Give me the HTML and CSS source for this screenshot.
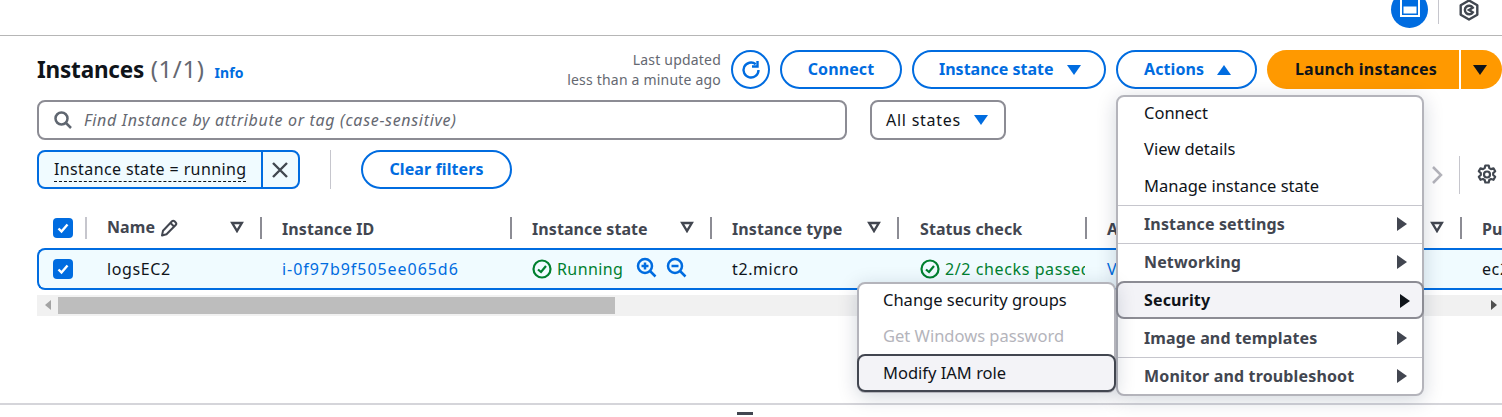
FILE: index.html
```html
<!DOCTYPE html>
<html lang="en">
<head>
<meta charset="utf-8">
<title>Instances</title>
<link rel="stylesheet" href="styles.css">
</head>
<body>
<div class="page">
  <header class="topbar">
    <span class="round-app">
      <svg width="37" height="37" viewBox="0 0 37 37"><path d="M9 0h20v26H9z" fill="#fff"/><path d="M11 0h16v24H11z" fill="#006ce0"/><path d="M12.500 15.500h13v7h-13z" fill="#fff"/></svg>
    </span>
    <span class="top-sep"></span>
    <svg class="hex" width="22" height="22" viewBox="0 0 22 22" fill="none" stroke="#414750" stroke-width="2.400"><path d="M11 1.500l8.300 4.700v9.600L11 20.500l-8.300-4.700V6.200z" stroke-linejoin="round"/><path d="M14.800 8.700a4.300 4.300 0 1 0 0 4.600L11 11z"/></svg>
  </header>

  <main class="panel">
    <div class="title-row">
      <h1 class="title">Instances <span class="count">(1/1)</span><a class="info">Info</a></h1>
      <div class="actions">
        <div class="updated">Last updated<br>less than a minute ago</div>
        <button class="btn btn-icon" aria-label="Refresh">
          <svg width="24" height="24" viewBox="0 0 24 24" fill="none" stroke="#006ce0" stroke-width="2.400"><path d="M19.500 12a7.500 7.500 0 1 1-2.800-5.800"/><path d="M18.500 3v5.500H13"/></svg>
        </button>
        <button class="btn btn-connect">Connect</button>
        <button class="btn btn-state">Instance state<svg class="caret" width="14" height="10" viewBox="0 0 14 10"><path d="M0 0h14L7 10z" fill="#006ce0"/></svg></button>
        <button class="btn btn-actions">Actions<svg class="caret" width="14" height="10" viewBox="0 0 14 10"><path d="M0 10h14L7 0z" fill="#006ce0"/></svg></button>
        <div class="split">
          <button class="launch">Launch instances</button>
          <button class="launch-drop" aria-label="More"><svg width="14" height="10" viewBox="0 0 14 10"><path d="M0 0h14L7 10z" fill="#0f141a"/></svg></button>
        </div>
      </div>
    </div>

    <div class="search-row">
      <div class="search">
        <svg width="20" height="20" viewBox="0 0 20 20" fill="none" stroke="#5f6670" stroke-width="2.500"><circle cx="8.500" cy="8.500" r="6"/><path d="M13 13l5 5"/></svg>
        <span class="placeholder">Find Instance by attribute or tag (case-sensitive)</span>
      </div>
      <div class="select"><span>All states</span><svg width="14" height="10" viewBox="0 0 14 10"><path d="M0 0h14L7 10z" fill="#006ce0"/></svg></div>
    </div>

    <div class="filter-row">
      <div class="token">
        <span class="token-text"><span class="dashed">Instance state = running</span></span>
        <button class="token-x" aria-label="Remove"><svg width="18" height="18" viewBox="0 0 18 18" stroke="#414750" stroke-width="2.400"><path d="M2 2l14 14M16 2L2 16"/></svg></button>
      </div>
      <span class="filter-sep"></span>
      <button class="btn btn-clear">Clear filters</button>
      <div class="pager">
        <svg width="12" height="20" viewBox="0 0 12 20" fill="none" stroke="#b4b4bb" stroke-width="2.500"><path d="M2 2l8 8-8 8"/></svg>
        <span class="pager-sep"></span>
        <svg class="gear" width="20" height="21" viewBox="0 0 20 21" fill="none" stroke="#414750" stroke-width="2.200"><path d="M8.300 1.500h3.400l.6 2.600 1.700 1 2.500-.8 1.700 3-2 1.800v1.900l2 1.800-1.700 3-2.500-.8-1.700 1-.6 2.500H8.300l-.6-2.500-1.700-1-2.500.8-1.700-3 2-1.800V9.100l-2-1.800 1.700-3 2.500.8 1.700-1z" stroke-linejoin="round"/><circle cx="10" cy="10.500" r="3"/></svg>
      </div>
    </div>

    <div class="table">
      <div class="grid head">
        <div class="cell cell-check"><span class="check"><svg width="14" height="14" viewBox="0 0 14 14" fill="none" stroke="#fff" stroke-width="2.400"><path d="M2.500 7.500l3 3 6-7"/></svg></span><i class="sep light"></i></div>
        <div class="cell th th-name"><span>Name</span><svg class="pencil" width="18" height="18" viewBox="0 0 18 18" fill="none" stroke="#424650" stroke-width="2"><path d="M2 16.500l1-4.800L12 2.300a1.800 1.800 0 0 1 2.500 0l1.200 1.200a1.800 1.800 0 0 1 0 2.500L6.500 15.300z" stroke-linejoin="round"/><path d="M10.500 4l3.500 3.500"/></svg><svg class="filt" width="14" height="12" viewBox="0 0 14 12" fill="none" stroke="#424650" stroke-width="2.400"><path d="M2.200 2h9.600L7 10z"/></svg><i class="sep"></i></div>
        <div class="cell th"><span>Instance ID</span><i class="sep"></i></div>
        <div class="cell th"><span>Instance state</span><svg class="filt" width="14" height="12" viewBox="0 0 14 12" fill="none" stroke="#424650" stroke-width="2.400"><path d="M2.200 2h9.600L7 10z"/></svg><i class="sep"></i></div>
        <div class="cell th"><span>Instance type</span><svg class="filt" width="14" height="12" viewBox="0 0 14 12" fill="none" stroke="#424650" stroke-width="2.400"><path d="M2.200 2h9.600L7 10z"/></svg><i class="sep"></i></div>
        <div class="cell th th-status"><span>Status check</span><i class="sep"></i></div>
        <div class="cell th"><span>Alarm status</span><svg class="filt" width="14" height="12" viewBox="0 0 14 12" fill="none" stroke="#424650" stroke-width="2.400"><path d="M2.200 2h9.600L7 10z"/></svg><i class="sep"></i></div>
        <div class="cell th"><span>Public IPv4 DNS</span></div>
      </div>
      <div class="grid row">
        <div class="cell cell-check"><span class="check"><svg width="14" height="14" viewBox="0 0 14 14" fill="none" stroke="#fff" stroke-width="2.400"><path d="M2.500 7.500l3 3 6-7"/></svg></span></div>
        <div class="cell td">logsEC2</div>
        <div class="cell td link id">i-0f97b9f505ee065d6</div>
        <div class="cell td green">
          <svg class="ok" width="20" height="20" viewBox="0 0 20 20" fill="none" stroke="#00802f" stroke-width="2.200"><circle cx="10" cy="10" r="8.500"/><path d="M6 10.500l3 2.500 5-6"/></svg><span>Running</span>
          <svg class="zoom plus" width="21" height="21" viewBox="0 0 21 21" fill="none" stroke="#006ce0" stroke-width="2.500"><circle cx="9" cy="9" r="7"/><path d="M14 14l5.500 5.500M5.500 9h7M9 5.500v7"/></svg>
          <svg class="zoom" width="21" height="21" viewBox="0 0 21 21" fill="none" stroke="#006ce0" stroke-width="2.500"><circle cx="9" cy="9" r="7"/><path d="M14 14l5.500 5.500M5.500 9h7"/></svg>
        </div>
        <div class="cell td">t2.micro</div>
        <div class="cell td green clip">
          <svg class="ok" width="20" height="20" viewBox="0 0 20 20" fill="none" stroke="#00802f" stroke-width="2.200"><circle cx="10" cy="10" r="8.500"/><path d="M6 10.500l3 2.500 5-6"/></svg><span class="status-text">2/2 checks passed</span>
        </div>
        <div class="cell td link">View alarms</div>
        <div class="cell td">ec2-3-15-1-1.compute</div>
      </div>
      <div class="scrollbar">
        <svg class="sb-arrow" width="6" height="10" viewBox="0 0 6 10"><path d="M6 0v10L0 5z" fill="#a3a3a3"/></svg>
        <span class="thumb"></span>
        <svg class="sb-arrow right" width="6" height="10" viewBox="0 0 6 10"><path d="M0 0v10l6-5z" fill="#505050"/></svg>
      </div>
    </div>
  </main>

  <footer class="footer"><span class="handle"></span></footer>

  <ul class="menu actions-menu">
    <li class="mi plain">Connect</li>
    <li class="mi plain">View details</li>
    <li class="mi plain last">Manage instance state</li>
    <li class="mi group">Instance settings<svg width="10" height="14" viewBox="0 0 10 14"><path d="M0 0l10 7-10 7z" fill="#424650"/></svg></li>
    <li class="mi group">Networking<svg width="10" height="14" viewBox="0 0 10 14"><path d="M0 0l10 7-10 7z" fill="#424650"/></svg></li>
    <li class="mi group active">Security<svg width="10" height="14" viewBox="0 0 10 14"><path d="M0 0l10 7-10 7z" fill="#0f141a"/></svg></li>
    <li class="mi group">Image and templates<svg width="10" height="14" viewBox="0 0 10 14"><path d="M0 0l10 7-10 7z" fill="#424650"/></svg></li>
    <li class="mi group">Monitor and troubleshoot<svg width="10" height="14" viewBox="0 0 10 14"><path d="M0 0l10 7-10 7z" fill="#424650"/></svg></li>
  </ul>

  <ul class="menu sub-menu">
    <li class="mi plain">Change security groups</li>
    <li class="mi plain disabled">Get Windows password</li>
    <li class="mi plain hover">Modify IAM role</li>
  </ul>
</div>
</body>
</html>
```

FILE: styles.css
```css
* { box-sizing: border-box; }
html, body { margin: 0; padding: 0; }
body { background: #fff; color: #0f141a; font-family: "Noto Sans", "Open Sans", sans-serif; font-size: 16px; overflow: hidden; }
button { font-family: inherit; cursor: pointer; }
.page { position: relative; width: 1502px; height: 417px; overflow: hidden; }

.topbar { height: 36px; border-bottom: 1px solid #b6b6b6; display: flex; align-items: flex-start; justify-content: flex-end; padding-right: 22px; overflow: hidden; }
.round-app { width: 37px; height: 37px; margin-top: -9px; border-radius: 50%; background: #006ce0; display: block; flex: none; overflow: hidden; }
.round-app svg { display: block; }
.top-sep { width: 1px; height: 24px; background: #c6c6cd; margin-left: 10px; }
.hex { margin-left: 19px; margin-top: -1px; }

.panel { padding: 14px 0 0 37px; height: 367px; }
.title-row { display: flex; justify-content: space-between; align-items: center; height: 39px; }
.title { margin: 2px 0 0; font-size: 22.500px; font-weight: 700; line-height: 38px; letter-spacing: -.2px; }
.count { font-weight: 400; color: #656871; margin-left: 1px; font-size: 24px; letter-spacing: .6px; }
.info { font-size: 14px; font-weight: 700; color: #006ce0; margin-left: 10px; letter-spacing: .1px; }
.actions { display: flex; align-items: center; }
.updated { font-size: 14px; line-height: 20px; color: #656871; text-align: right; margin-right: 10px; letter-spacing: .2px; }
.btn { height: 39px; border: 2px solid #006ce0; border-radius: 20px; background: #fff; color: #006ce0; font-size: 16px; font-weight: 700; display: inline-flex; align-items: center; justify-content: center; padding: 0 0 2px; flex: none; letter-spacing: .1px; }
.caret { margin-top: 2px; }
.btn-icon { width: 39px; border-radius: 50%; margin-right: 10px; padding: 0; }
.btn-connect { width: 122px; margin-right: 10px; }
.btn-state { width: 194px; margin-right: 10px; gap: 13px; justify-content: flex-start; padding-left: 25px; letter-spacing: 0; }
.btn-actions { width: 141px; margin-right: 10px; gap: 13px; justify-content: flex-start; padding-left: 26px; }
.split { display: flex; gap: 2px; }
.launch { width: 192px; height: 39px; border: 0; border-radius: 20px 0 0 20px; background: #f90; color: #0f141a; font-size: 16px; font-weight: 700; padding: 0 0 2px 6px; letter-spacing: .25px; }
.launch-drop { width: 41px; height: 39px; border: 0; border-radius: 0 20px 20px 0; background: #f90; padding: 0 3px 0 0; display: flex; align-items: center; justify-content: center; }

.search-row { display: flex; margin-top: 11px; gap: 23px; }
.search { width: 810px; height: 40px; border: 2px solid #8c8c94; border-radius: 8px; display: flex; align-items: center; padding-left: 14px; gap: 11px; }
.placeholder { font-style: italic; color: #656871; letter-spacing: .68px; }
.select { width: 136px; height: 40px; border: 2px solid #8c8c94; border-radius: 8px; display: flex; align-items: center; padding-left: 14px; gap: 13px; }
.select span { letter-spacing: .75px; }

.filter-row { display: flex; align-items: center; margin-top: 10px; height: 39px; }
.token { width: 263px; height: 39px; border: 2px solid #006ce0; border-radius: 8px; background: #f0fbff; display: flex; overflow: hidden; flex: none; }
.token-text { flex: 1; padding-left: 15px; line-height: 34px; white-space: nowrap; letter-spacing: .38px; }
.dashed { border-bottom: 1px dashed #0f141a; padding-bottom: 1px; }
.token-x { width: 37px; border: 0; border-left: 2px solid #006ce0; background: transparent; padding: 0 2px 0 0; display: flex; align-items: center; justify-content: center; }
.filter-sep { width: 1px; height: 39px; background: #c6c6cd; margin: 0 30px; flex: none; }
.btn-clear { width: 151px; }
.pager { margin-left: auto; margin-top: 10px; display: flex; align-items: center; padding-right: 5px; }
.pager-sep { width: 1px; height: 38px; background: #c6c6cd; margin: 0 17px 0 16px; }

.table { margin-top: 25px; overflow: hidden; }
.grid { display: grid; grid-template-columns: 49px 175px 250px 200px 187px 188px 375px 200px; width: 1624px; }
.cell { position: relative; display: flex; align-items: center; white-space: nowrap; padding-left: 21px; }
.head { height: 29px; }
.th { color: #424650; font-weight: 700; letter-spacing: .08px; }
.th-name > span { margin-top: -4px; }
.th-status { padding-left: 22px; }
.pencil { margin-left: 5px; margin-top: -2px; }
.filt { position: absolute; right: 17px; top: 7px; }
.sep { position: absolute; right: -1px; top: 3px; width: 2px; height: 22px; background: #8c8c94; }
.sep.light { background: #c6c6cd; }
.cell-check { padding-left: 16px; }
.head .check { margin-top: -2px; }
.check { width: 20px; height: 20px; border-radius: 4px; background: #006ce0; display: flex; align-items: center; justify-content: center; flex: none; }
.row { height: 42px; margin-top: 5px; border: 2px solid #006ce0; border-right: 0; border-radius: 8px 0 0 8px; background: #f0fbff; grid-template-columns: 47px 175px 250px 200px 187px 188px 375px 200px; }
.row .cell-check { padding-left: 14px; }
.td { letter-spacing: .6px; padding-bottom: 1px; }
.id { letter-spacing: .95px; }
.link { color: #006ce0; }
.green { color: #00802f; letter-spacing: .4px; }
.clip { overflow: hidden; padding-right: 1px; padding-left: 22px; letter-spacing: .6px; }
.status-text { overflow: hidden; min-width: 0; }
.ok { flex: none; margin-right: 5px; }
.zoom { margin-left: 9px; flex: none; margin-top: -2px; }
.zoom.plus { margin-left: 13px; }
.scrollbar { position: relative; height: 21px; margin-top: 5px; background: #f1f1f1; display: flex; align-items: center; }
.sb-arrow { position: absolute; left: 8px; top: 5px; }
.sb-arrow.right { left: auto; right: 5px; }
.thumb { position: absolute; left: 21px; top: 2px; width: 557px; height: 17px; background: #bdbdbd; }

.footer { height: 14px; border-top: 2px solid #d5d5da; display: flex; justify-content: center; position: relative; }
.handle { width: 16px; height: 3px; background: #424650; margin-top: 7px; margin-left: -12px; }

.menu { list-style: none; margin: 0; padding: 0; position: absolute; background: #fff; border: 2px solid #b4b4bb; border-radius: 8px; box-shadow: 0 4px 20px rgba(0, 27, 60, .18); }
.actions-menu { left: 1116px; top: 95px; width: 308px; height: 301px; }
.sub-menu { left: 857px; top: 282px; width: 259px; height: 111px; }
.mi { display: flex; align-items: center; justify-content: space-between; padding: 0 15px 2px 26px; white-space: nowrap; }
.plain { height: 36px; font-size: 16.500px; }
.plain:first-child { margin-top: -2px; }
.actions-menu .plain.last { height: 38px; }
.sub-menu .mi { padding-left: 24px; }
.group { height: 38px; border-top: 1px solid #c6c6cd; font-weight: 700; color: #424650; letter-spacing: .15px; }
.mi svg { margin-top: 1px; }
.active { margin: 0 -2px; height: 38px; padding: 0 12px 0 26px; border: 2px solid #8c8c94; border-radius: 8px; background: #f3f3f7; color: #0f141a; position: relative; }
.active + .group { border-top-color: transparent; }
.disabled { color: #b4b4bb; }
.sub-menu .hover { margin: 0 -2px; height: 38px; padding: 0 15px 2px 24px; border: 2px solid #424650; border-radius: 8px; background: #f3f3f7; }
```
